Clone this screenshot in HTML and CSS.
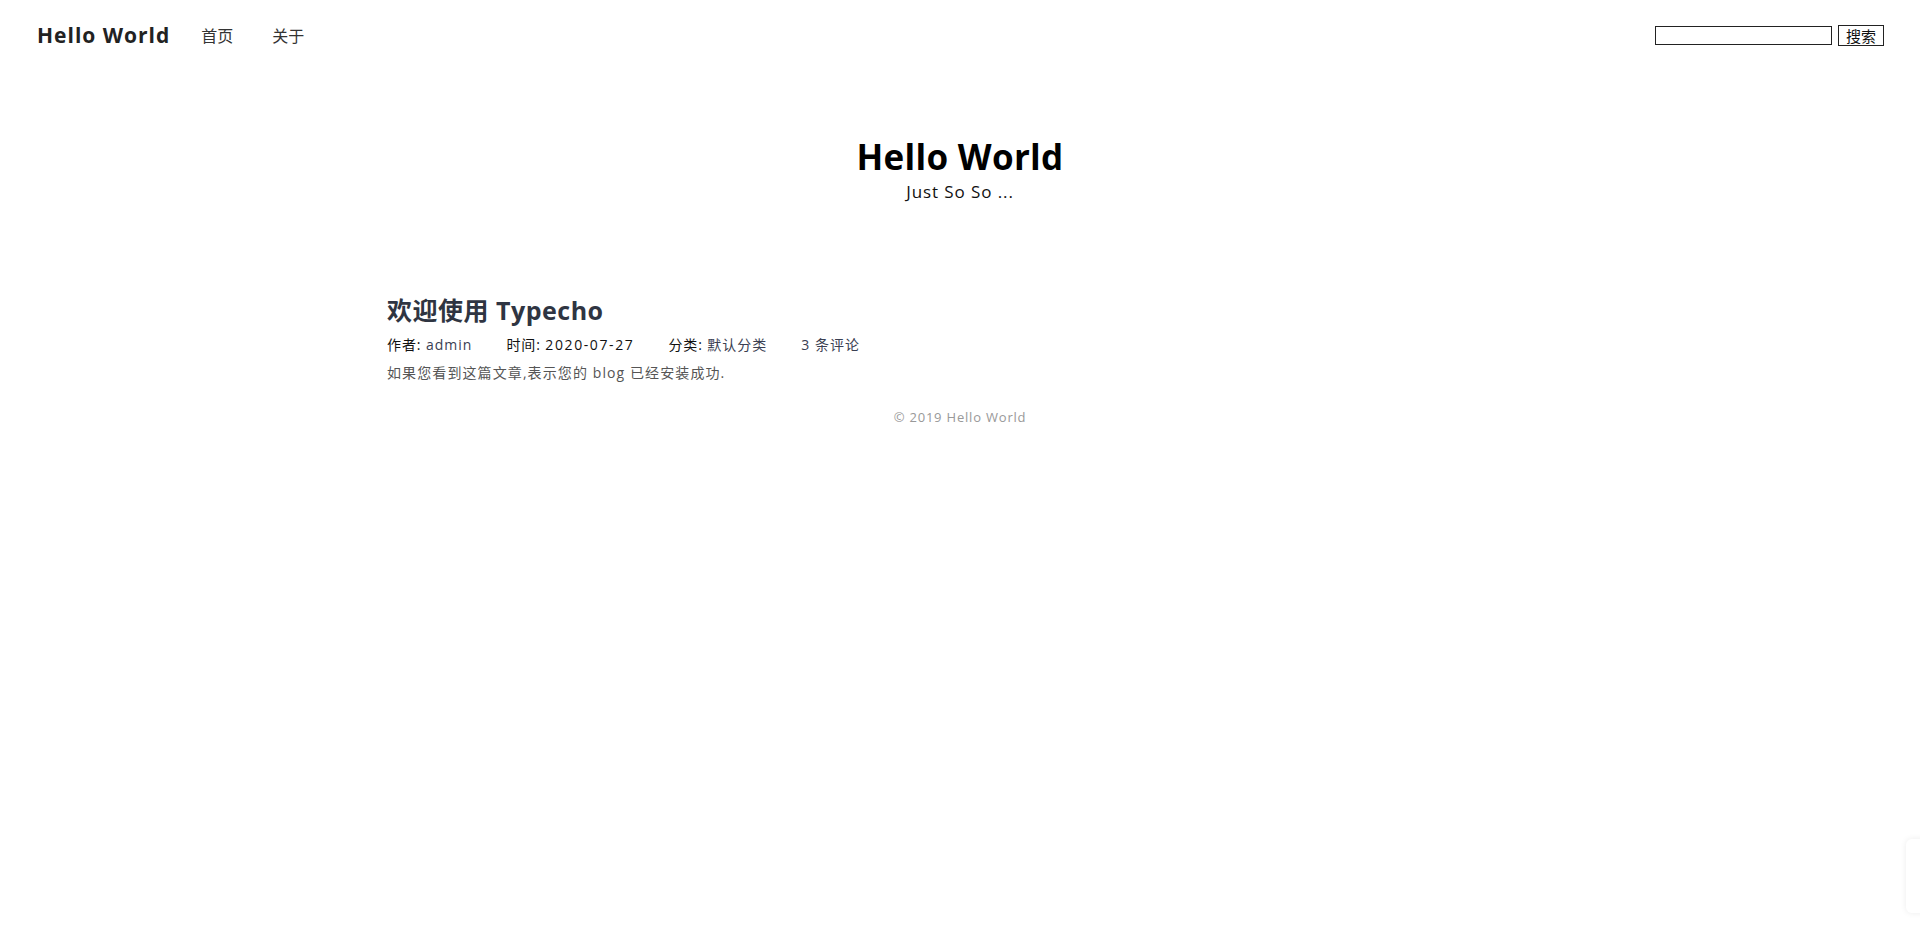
FILE: index.html
```html
<!DOCTYPE html>
<html lang="zh-CN">
<head>
<meta charset="utf-8">
<title>Hello World</title>
<link rel="stylesheet" href="styles.css">
</head>
<body>
<nav class="nav">
  <a class="brand" href="#">Hello World</a>
  <a class="nav-link" href="#">首页</a>
  <a class="nav-link" href="#">关于</a>
  <form class="search">
    <input class="search-input" type="text">
    <button class="search-btn" type="button">搜索</button>
  </form>
</nav>
<header class="hero">
  <h1 class="hero-title">Hello World</h1>
  <p class="hero-sub">Just So So ...</p>
</header>
<main class="content">
  <article class="post">
    <h2 class="post-title">欢迎使用 Typecho</h2>
    <div class="post-meta">
      <span class="meta-item"><span class="meta-label">作者:</span> <a class="meta-val" href="#">admin</a></span>
      <span class="meta-item"><span class="meta-label">时间:</span> <span class="meta-date">2020-07-27</span></span>
      <span class="meta-item"><span class="meta-label">分类:</span> <a class="meta-val" href="#">默认分类</a></span>
      <span class="meta-item"><a class="meta-val" href="#">3 条评论</a></span>
    </div>
    <p class="post-excerpt">如果您看到这篇文章,表示您的 blog 已经安装成功.</p>
  </article>
  <footer class="footer">© 2019 Hello World</footer>
</main>
<div class="corner-widget"></div>
</body>
</html>
```
FILE: styles.css
```css
html, body {
  margin: 0;
  padding: 0;
  background: #fff;
}
body {
  font-family: "Open Sans", "Noto Sans CJK SC", sans-serif;
  color: #222;
}
a {
  text-decoration: none;
  color: inherit;
}
.nav {
  display: flex;
  align-items: center;
  height: 70px;
  padding: 0 36px 0 37px;
}
.brand {
  font-size: 21px;
  font-weight: 700;
  color: #222;
  margin-right: 31px;
  letter-spacing: 1px;
}
.nav-link {
  font-size: 16px;
  color: #333;
  margin-right: 39px;
}
.search {
  margin: 0 0 0 auto;
  display: flex;
  align-items: center;
}
.search-input {
  box-sizing: border-box;
  width: 177px;
  height: 19px;
  border: 1px solid #222;
  padding: 0 2px;
  margin: 0;
}
.search-btn {
  box-sizing: border-box;
  margin-left: 6px;
  height: 21px;
  width: 46px;
  border: 1px solid #222;
  background: #fff;
  font-family: "Noto Sans CJK SC", sans-serif;
  font-size: 15px;
  line-height: 1;
  padding: 0;
  color: #111;
}
.hero {
  text-align: center;
  padding-top: 64px;
}
.hero-title {
  margin: 0;
  font-size: 35px;
  font-weight: 700;
  color: #000;
  line-height: 46px;
  letter-spacing: 0.3px;
}
.hero-sub {
  margin: 0;
  font-size: 17px;
  color: #111;
  line-height: 24px;
  letter-spacing: 0.9px;
}
.content {
  width: 1146px;
  margin: 0 auto;
  padding-top: 89px;
}
.post-title {
  margin: 0;
  font-size: 25px;
  font-weight: 700;
  color: #2f3542;
  line-height: 34px;
  letter-spacing: 0.5px;
}
.post-meta {
  display: flex;
  font-size: 14px;
  line-height: 22px;
  margin-top: 7px;
  letter-spacing: 0.9px;
}
.meta-item {
  margin-right: 34px;
}
.meta-label {
  color: #111;
}
.meta-val {
  color: #3a4052;
  letter-spacing: 1px;
}
.meta-date {
  color: #111;
  letter-spacing: 1.6px;
}
.post-excerpt {
  margin: 6px 0 0;
  font-size: 14px;
  color: #555;
  line-height: 22px;
  letter-spacing: 1.1px;
}
.footer {
  text-align: center;
  font-size: 13px;
  color: #999;
  letter-spacing: 0.8px;
  margin-top: 24px;
}
.corner-widget {
  position: fixed;
  right: -10px;
  bottom: 24px;
  width: 24px;
  height: 74px;
  border-radius: 6px;
  box-shadow: 0 0 6px rgba(0,0,0,0.08);
  background: #fff;
}
```
